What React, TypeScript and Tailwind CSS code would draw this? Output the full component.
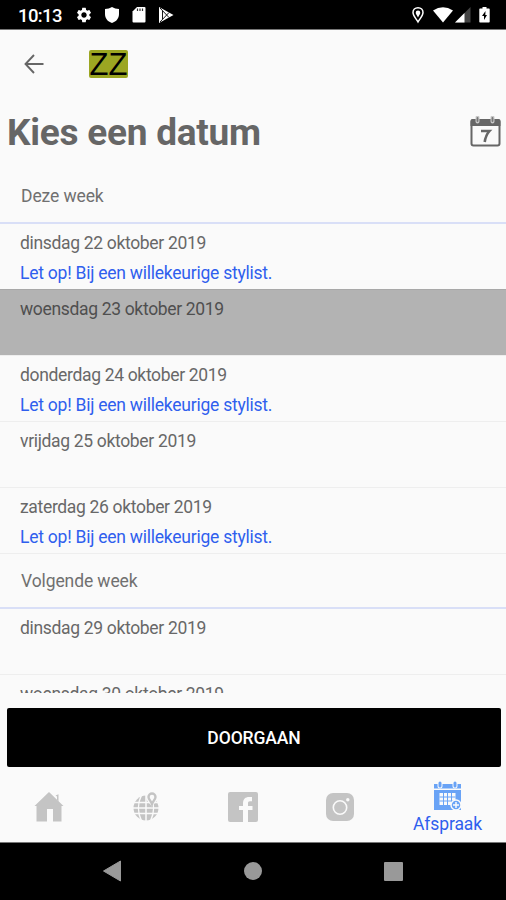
import type { ReactNode } from "react";
import { MdSettings } from "react-icons/md";

type Day = { label: string; note?: boolean; selected?: boolean };

const thisWeek: Day[] = [
  { label: "dinsdag 22 oktober 2019", note: true },
  { label: "woensdag 23 oktober 2019", selected: true },
  { label: "donderdag 24 oktober 2019", note: true },
  { label: "vrijdag 25 oktober 2019" },
  { label: "zaterdag 26 oktober 2019", note: true },
];

const nextWeek: Day[] = [
  { label: "dinsdag 29 oktober 2019" },
  { label: "woensdag 30 oktober 2019" },
];

function StatusBar() {
  return (
    <header className="flex h-[30px] shrink-0 items-center border-b border-[#777] bg-black pr-4 pl-[18px] text-white">
      <span className="w-[57px] pt-[3px] text-[18.5px] leading-none font-medium tracking-[-0.6px]">
        10:13
      </span>
      <MdSettings className="mt-px size-[18px]" />
      <svg className="mt-px ml-[10px]" width="18" height="18" viewBox="0 0 18 18">
        <path
          d="M9 1c2 1.300 4.300 2 7 2v5c0 4.300-2.500 7.500-7 9-4.500-1.500-7-4.700-7-9V3c2.700 0 5-.7 7-2z"
          fill="currentColor"
        />
      </svg>
      <svg className="mt-px ml-[11px]" width="14" height="18" viewBox="0 0 14 18">
        <path
          d="M5 1h7.500q1 0 1 1v13.500q0 1-1 1h-11q-1 0-1-1V5.500z"
          fill="currentColor"
        />
        <path d="M5.500 2.500v2.500M8 2.500v2.500M10.500 2.500v2.500" stroke="#333" strokeWidth="1.200" />
      </svg>
      <svg className="mt-px ml-3" width="16" height="18" viewBox="0 0 16 18">
        <path d="M1 1l14.500 8L1 17z" fill="currentColor" />
        <path d="M2 2l9 9.500M2 16l9-9.500M4.500 5v8" fill="none" stroke="#000" strokeWidth="0.9" />
      </svg>

      <svg className="mt-px ml-auto" width="14" height="18" viewBox="0 0 14 18">
        <path
          d="M7 1.700c-3 0-5 2.100-5 4.800C2 9.700 5 12.500 7 16c2-3.500 5-6.300 5-9.500 0-2.700-2-4.800-5-4.800z"
          fill="none"
          stroke="currentColor"
          strokeWidth="1.500"
        />
        <path d="M7 4.500a2.300 2.300 0 0 1 2.300 2.300C9.300 8.500 8 9 7 11.500 6 9 4.700 8.500 4.700 6.800A2.300 2.300 0 0 1 7 4.500z" fill="currentColor" />
      </svg>
      <svg className="mt-px ml-[8px]" width="20" height="18" viewBox="0 0 20 18">
        <path d="M0 4.500Q10-2 20 4.500L10 16.500z" fill="currentColor" />
      </svg>
      <svg className="mt-px ml-[2px]" width="16" height="18" viewBox="0 0 16 18">
        <path d="M15.500 1v15.500H0z" fill="#444" />
        <path d="M9.500 7v9.500H0z" fill="currentColor" />
      </svg>
      <svg className="mt-px ml-[8px]" width="11" height="18" viewBox="0 0 11 18">
        <path d="M3.500 1h4v1.500H10q.7 0 .7.700v12.600q0 .7-.7.700H1q-.7 0-.7-.7V3.200q0-.7.7-.7h2.500z" fill="currentColor" />
        <path d="M6.500 5L3 10h2v4l3-5H6.300z" fill="#000" />
      </svg>
    </header>
  );
}

function DayRow({ label, note, selected }: Day) {
  return (
    <li
      className={
        selected
          ? "h-[66px] border-t border-[#a8a8a8] bg-[#b3b3b3] pt-[7px] pl-5 text-[#4f4f4f]"
          : "h-[66px] border-t border-[#eeeeee] pt-[7px] pl-5 text-[#686868] first:h-[65px] first:border-t-0"
      }
    >
      <p className="text-[17.5px] leading-6 tracking-[-0.33px]">{label}</p>
      {note && (
        <p className="pt-[6px] text-[17.5px] leading-6 tracking-[-0.24px] text-[#2f5fee]">
          Let op! Bij een willekeurige stylist.
        </p>
      )}
    </li>
  );
}

function Week({ title, days }: { title: string; days: Day[] }) {
  return (
    <section className="border-t border-[#eeeeee] first:border-[#fafafa]">
      <h2 className="flex h-[55px] items-center border-b-2 border-[#d9dff7] pt-[2px] pl-[21px] text-[17.5px] tracking-[-0.1px] text-[#707070]">
        {title}
      </h2>
      <ul>
        {days.map((day) => (
          <DayRow key={day.label} {...day} />
        ))}
      </ul>
    </section>
  );
}

function CalendarIcon() {
  return (
    <svg width="32" height="32" viewBox="0 0 32 32" aria-hidden>
      <rect x="2.500" y="4" width="28" height="25.500" rx="2" fill="none" stroke="#666" strokeWidth="2" />
      <path d="M1.500 10V5q0-2 2-2h26q2 0 2 2v5z" fill="#666" />
      <path d="M8.500 1.500v4M23.500 1.500v4" stroke="#c8c8c8" strokeWidth="4" strokeLinecap="round" />
      <path d="M8.500 2v3M23.500 2v3" stroke="#777" strokeWidth="1.800" strokeLinecap="round" />
      <path d="M12 15h8.500c-2.700 3-4.200 6.500-4.800 11" fill="none" stroke="#666" strokeWidth="2.600" />
    </svg>
  );
}

function NavItem({ children, active }: { children: ReactNode; active?: string }) {
  return (
    <a
      href="#"
      className="flex w-[97px] flex-col items-center text-[#c4c4c4]"
    >
      {children}
      {active && (
        <span className="pt-px text-[17.5px] leading-6 tracking-[-0.1px] text-[#2f5fee]">{active}</span>
      )}
    </a>
  );
}

function BottomNav() {
  return (
    <nav className="flex h-[75px] shrink-0 pt-[14px]">
      <NavItem>
        <svg className="mt-[10px]" width="30" height="32" viewBox="0 0 30 32">
          <path d="M15 1l14.500 14H27.500v15.500h-8.500V18h-6v12.500H2.500V15H.5z" fill="currentColor" />
          <path d="M21.500 4.500l3-1.300v7.300L23 9V5.500z" fill="currentColor" />
        </svg>
      </NavItem>
      <NavItem>
        <svg className="mt-[10px]" width="28" height="32" viewBox="0 0 28 32">
          <circle cx="14" cy="17" r="12.500" fill="currentColor" />
          <path
            d="M1 11.500h26M1 17h26M1 22.500h26M14 4v26M9.500 4c-4 8-4 18 0 26M18.500 4c4 8 4 18 0 26"
            fill="none"
            stroke="#fafafa"
            strokeWidth="1.500"
          />
          <path d="M20 0c-4 0-6 3-6 6 0 4 4 6 6 10 2-4 6-6 6-10 0-3-2-6-6-6z" fill="#fafafa" />
          <path
            d="M20 2.500a3.500 3.500 0 0 0-3.500 3.500c0 2.500 2.500 4 3.500 7 1-3 3.500-4.500 3.500-7A3.500 3.500 0 0 0 20 2.500z"
            fill="none"
            stroke="currentColor"
            strokeWidth="2.400"
          />
        </svg>
      </NavItem>
      <NavItem>
        <svg className="mt-[10px]" width="30" height="32" viewBox="0 0 30 32">
          <rect y="1" width="30" height="30" rx="2" fill="currentColor" />
          <path
            d="M15 31V19h-4v-4h4v-2.500C15 8 17.500 6 21 6h3v4.300h-2c-1.600 0-2 .8-2 2.200V15h4.500v4H20v12z"
            fill="#fafafa"
          />
        </svg>
      </NavItem>
      <NavItem>
        <svg className="mt-[10px]" width="30" height="32" viewBox="0 0 30 32">
          <rect x="1" y="2" width="28" height="28" rx="7" fill="currentColor" />
          <circle cx="15" cy="16.500" r="6.700" fill="none" stroke="#fafafa" strokeWidth="1.600" />
          <circle cx="22.800" cy="8.700" r="1.700" fill="#fafafa" />
        </svg>
      </NavItem>
      <div className="w-[11px]" />
      <NavItem active="Afspraak">
        <svg width="29" height="30" viewBox="0 0 29 30">
          <path d="M1 3h27v4.500H1zM1 9h27v20H1z" fill="#69a3f6" />
          <path d="M7 1v4M22 1v4" stroke="#fafafa" strokeWidth="5" strokeLinecap="round" />
          <path d="M7 2v3M22 2v3" stroke="#69a3f6" strokeWidth="3" strokeLinecap="round" />
          <path d="M6.500 12h16v12h-16z" fill="#fafafa" />
          <path d="M10.500 12v12M14.500 12v12M18.500 12v12M6.500 16h16M6.500 20h16" stroke="#69a3f6" strokeWidth="1" />
          <circle cx="23" cy="24" r="5" fill="#69a3f6" stroke="#fafafa" strokeWidth="1.500" />
          <path d="M23 21v6M20 24h6" stroke="#fafafa" strokeWidth="1.500" />
        </svg>
      </NavItem>
    </nav>
  );
}

function SystemNav() {
  return (
    <footer className="flex h-[59px] shrink-0 items-center justify-between border-t border-[#777] bg-black pr-[103px] pb-[2px] pl-[102px]">
      <svg width="20" height="22" viewBox="0 0 20 22">
        <path d="M1.500 11L18.500 1v20z" fill="#999" stroke="#999" strokeWidth="1" strokeLinejoin="round" />
      </svg>
      <div className="size-[18px] rounded-full bg-[#999]" />
      <div className="size-[19px] rounded-[1px] bg-[#999]" />
    </footer>
  );
}

export default function App() {
  return (
    <div className="flex h-[900px] w-[506px] flex-col overflow-hidden bg-[#fafafa] font-['Roboto',sans-serif]">
      <StatusBar />

      {/* App bar with back arrow and salon logo */}
      <div className="flex h-[68px] shrink-0 items-center pl-6">
        <svg width="20" height="20" viewBox="0 0 20 20" fill="none" stroke="#666" strokeWidth="1.900">
          <path d="M19.500 10H2M10 1L1.500 10 10 19" />
        </svg>
        <div className="ml-[45px] flex h-7 w-[39px] items-center justify-center rounded-[2px] bg-[#9ca622] font-['Liberation_Sans',sans-serif] text-[31px] leading-none text-black">
          ZZ
        </div>
      </div>

      <div className="flex h-[70px] shrink-0 items-center justify-between pr-[5px] pb-[2px] pl-[7px]">
        <h1 className="text-[37px] leading-none font-bold tracking-[-0.25px] text-[#666]">
          Kies een datum
        </h1>
        <CalendarIcon />
      </div>

      <main className="h-[525px] shrink-0 overflow-hidden">
        <Week title="Deze week" days={thisWeek} />
        <Week title="Volgende week" days={nextWeek} />
      </main>

      <div className="h-[74px] shrink-0 pt-[15px] pr-[5px] pl-[7px]">
        <button className="h-[59px] w-full rounded-[2px] bg-black pt-[2px] text-[17.5px] font-medium tracking-[-0.1px] text-white">
          DOORGAAN
        </button>
      </div>

      <BottomNav />
      <SystemNav />
    </div>
  );
}
